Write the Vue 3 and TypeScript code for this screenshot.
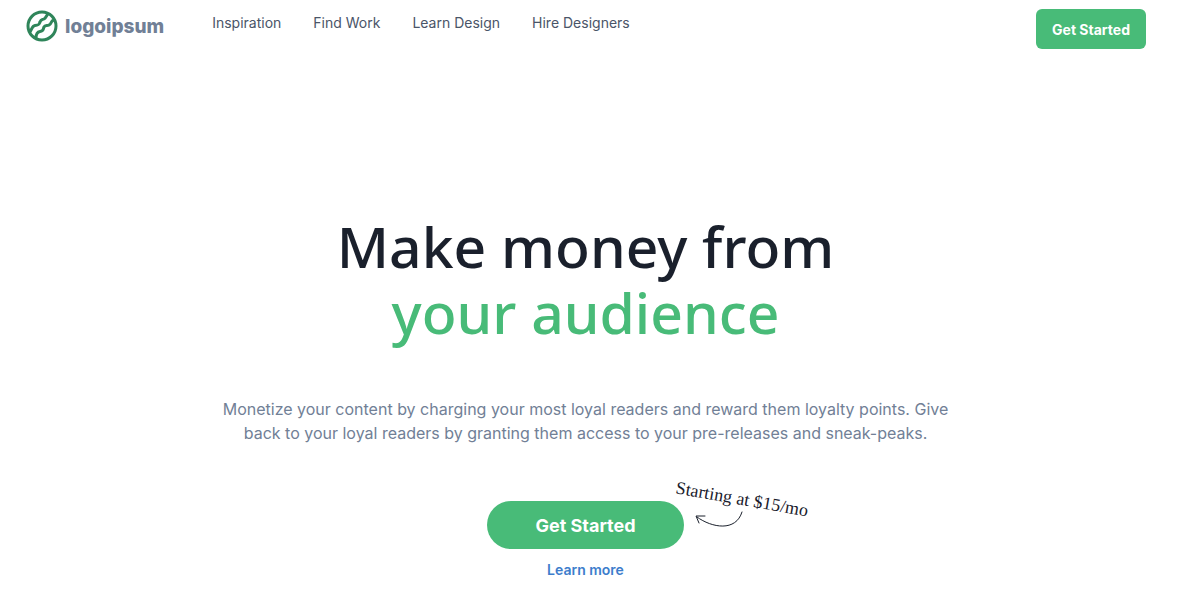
<script setup lang="ts">
interface NavItem {
  label: string
  href: string
}

const navItems: NavItem[] = [
  { label: 'Inspiration', href: '#inspiration' },
  { label: 'Find Work', href: '#find-work' },
  { label: 'Learn Design', href: '#learn-design' },
  { label: 'Hire Designers', href: '#hire-designers' },
]
</script>

<template>
  <div class="page">
    <header class="header">
      <a class="logo" href="#home">
        <svg class="logo-mark" viewBox="0 0 32 32" fill="none" aria-hidden="true">
          <circle cx="16" cy="16" r="14" />
          <path d="M4 22C6 19 6 16 9 15.500C14 15 13 14 14 12C15 9 16 10 18 9C20 8 20 6 22 4" />
          <path d="M10 28C10 24 11 22 14 21.500C18 21 17 19 18 17C19 15 21 16 23 15C26 14 24 11 28 10" />
        </svg>
        <span>logoipsum</span>
      </a>
      <nav class="nav" aria-label="Main">
        <a v-for="item in navItems" :key="item.label" :href="item.href">{{ item.label }}</a>
      </nav>
      <button class="header-cta" type="button">Get Started</button>
    </header>

    <main class="hero">
      <h1>
        Make money from
        <span class="accent">your audience</span>
      </h1>
      <p class="lead">
        Monetize your content by charging your most loyal readers and reward them loyalty points.
        Give back to your loyal readers by granting them access to your pre-releases and sneak-peaks.
      </p>
      <div class="actions">
        <button class="primary" type="button">Get Started</button>
        <a class="more" href="#learn-more">Learn more</a>
        <svg class="arrow" viewBox="0 0 50 20" fill="none" aria-hidden="true">
          <path d="M48 3C42 23 18 19 3 8M11 7L2 7L5 14" />
        </svg>
        <span class="price">Starting at $15/mo</span>
      </div>
    </main>
  </div>
</template>

<style>
body {
  margin: 0;
  background: #fff;
}
</style>

<style scoped>
.page {
  padding-right: 24px;
  font-family: Inter, "Liberation Sans", sans-serif;
  color: #1a202c;
}

a {
  text-decoration: none;
}

button {
  border: 0;
  background: #48bb78;
  color: #fff;
  font-family: inherit;
  font-weight: 700;
  cursor: pointer;
}

.header {
  display: flex;
  align-items: flex-start;
  padding: 9px 25px 8px 26px;
}

.logo {
  display: flex;
  align-items: center;
  gap: 7px;
  height: 34px;
  color: #718096;
  font-size: 19px;
  font-weight: 800;
}

.logo-mark {
  width: 32px;
  height: 32px;
  stroke: #2f855a;
  stroke-width: 3;
}

.nav {
  display: flex;
  gap: 32px;
  margin-left: 48px;
  padding-top: 3px;
}

.nav a {
  color: #4a5568;
  font-size: 14px;
  font-weight: 400;
  line-height: 21px;
}

.header-cta {
  height: 40px;
  margin-left: auto;
  padding: 0 16px;
  border-radius: 6px;
  font-size: 14px;
}

.hero {
  display: flex;
  flex-direction: column;
  align-items: center;
  gap: 52px;
  max-width: 736px;
  margin: 0 auto;
  padding-top: 156px;
  text-align: center;
}

h1 {
  margin: 0;
  font-family: "Noto Sans", "Open Sans", sans-serif;
  font-size: 57px;
  font-weight: 500;
  line-height: 66px;
}

.accent {
  display: block;
  color: #48bb78;
}

.lead {
  margin: 0;
  color: #718096;
  font-size: 16px;
  line-height: 24px;
}

.actions {
  position: relative;
  display: flex;
  flex-direction: column;
  align-items: center;
  gap: 12px;
  margin-top: 4px;
}

.primary {
  height: 48px;
  padding: 0 48px;
  border-radius: 24px;
  font-size: 18px;
}

.more {
  color: #3d7dcc;
  font-size: 14px;
  font-weight: 600;
  line-height: 18px;
}

.arrow {
  position: absolute;
  top: 8px;
  left: calc(100% + 10px);
  width: 50px;
  height: 20px;
  stroke: #1a202c;
  stroke-width: 1;
  stroke-linecap: round;
}

.price {
  position: absolute;
  top: -15px;
  right: -125px;
  font-family: "Liberation Serif", serif;
  font-size: 18px;
  line-height: 27px;
  white-space: nowrap;
  transform: rotate(10deg);
}
</style>
